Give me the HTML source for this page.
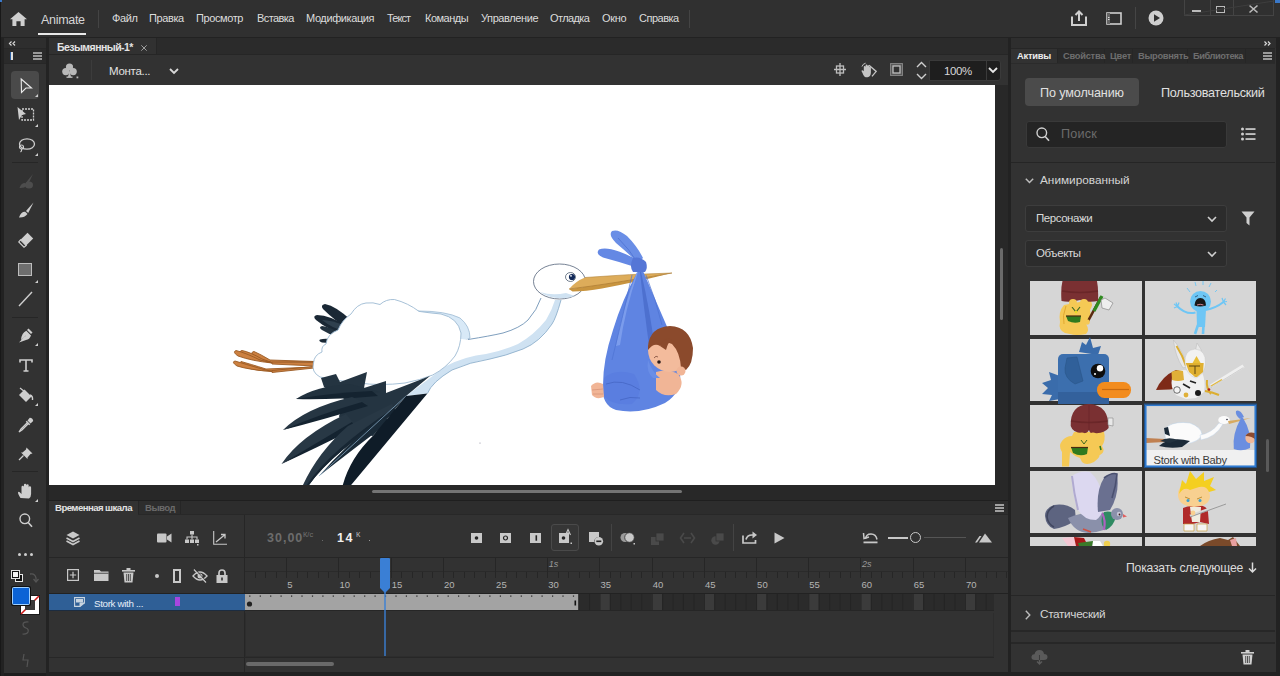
<!DOCTYPE html>
<html><head><meta charset="utf-8">
<style>
*{margin:0;padding:0;box-sizing:border-box}
html,body{width:1280px;height:676px;overflow:hidden;background:#1e1e1e;font-family:"Liberation Sans",sans-serif;color:#c8c8c8}
.a{position:absolute}
.t{position:absolute;white-space:nowrap;line-height:1}
svg{position:absolute;overflow:visible}
</style></head><body>

<!-- MENU BAR -->
<div class="a" style="left:0;top:0;width:1280px;height:37px;background:#303030"></div>
<div class="a" style="left:0;top:37px;width:1280px;height:1px;background:#222"></div>
<div class="a" style="left:0;top:0;width:1px;height:676px;background:#181818"></div>
<div class="a" style="left:0;top:0;width:2px;height:2px;background:#3a78c8"></div>
<!-- home icon -->
<svg style="left:10px;top:12px" width="17" height="14" viewBox="0 0 17 14"><path d="M8.5 0 L17 7.2 L14.6 7.2 L14.6 14 L10.6 14 L10.6 9.2 L6.4 9.2 L6.4 14 L2.4 14 L2.4 7.2 L0 7.2 Z" fill="#cfcfcf"/></svg>
<div class="t" style="left:41px;top:14px;font-size:12.5px;letter-spacing:-0.3px;color:#d6d6d6">Animate</div>
<div class="a" style="left:38px;top:33px;width:48px;height:2px;background:#e8e8e8"></div>
<div class="a" style="left:98px;top:10px;width:1px;height:18px;background:#444"></div>
<div class="t" style="left:112px;top:13px;font-size:11px;letter-spacing:-0.4px;color:#dcdcdc">Файл</div>
<div class="t" style="left:149px;top:13px;font-size:11px;letter-spacing:-0.4px;color:#dcdcdc">Правка</div>
<div class="t" style="left:196px;top:13px;font-size:11px;letter-spacing:-0.4px;color:#dcdcdc">Просмотр</div>
<div class="t" style="left:257px;top:13px;font-size:11px;letter-spacing:-0.6px;color:#dcdcdc">Вставка</div>
<div class="t" style="left:306px;top:13px;font-size:11px;letter-spacing:-0.4px;color:#dcdcdc">Модификация</div>
<div class="t" style="left:387px;top:13px;font-size:11px;letter-spacing:-0.9px;color:#dcdcdc">Текст</div>
<div class="t" style="left:425px;top:13px;font-size:11px;letter-spacing:-0.5px;color:#dcdcdc">Команды</div>
<div class="t" style="left:481px;top:13px;font-size:11px;letter-spacing:-0.4px;color:#dcdcdc">Управление</div>
<div class="t" style="left:550px;top:13px;font-size:11px;letter-spacing:-0.6px;color:#dcdcdc">Отладка</div>
<div class="t" style="left:602px;top:13px;font-size:11px;letter-spacing:-0.3px;color:#dcdcdc">Окно</div>
<div class="t" style="left:639px;top:13px;font-size:11px;letter-spacing:-0.5px;color:#dcdcdc">Справка</div>
<div class="a" style="left:689px;top:10px;width:1px;height:18px;background:#444"></div>
<!-- share icon -->
<svg style="left:1071px;top:10px" width="16" height="16" viewBox="0 0 16 16"><path d="M1 6.5 V15 H15 V6.5 M8 11 V1.5 M4.5 5 L8 1.5 L11.5 5" fill="none" stroke="#cfcfcf" stroke-width="2"/></svg>
<!-- panel icon -->
<svg style="left:1106px;top:12px" width="16" height="13" viewBox="0 0 16 13"><rect x="1" y="1" width="14" height="11" fill="none" stroke="#cfcfcf" stroke-width="1.6"/><rect x="1" y="1" width="3" height="11" fill="#666"/><rect x="2" y="5" width="1.5" height="1" fill="#ddd"/><rect x="2" y="7" width="1.5" height="1" fill="#ddd"/></svg>
<div class="a" style="left:1135px;top:7px;width:1px;height:22px;background:#454545"></div>
<!-- play circle -->
<svg style="left:1148px;top:10px" width="16" height="16" viewBox="0 0 16 16"><circle cx="8" cy="8" r="7.5" fill="#cfcfcf"/><path d="M6 4.2 L12 8 L6 11.8 Z" fill="#303030"/></svg>
<!-- window controls -->
<div class="a" style="left:1184px;top:-1px;width:90px;height:17px;border:1px solid #444;border-top:none"></div>
<div class="a" style="left:1210px;top:0;width:1px;height:16px;background:#444"></div>
<div class="a" style="left:1233px;top:0;width:1px;height:16px;background:#444"></div>
<div class="a" style="left:1192px;top:10px;width:9px;height:2px;background:#bbb"></div>
<div class="a" style="left:1216px;top:6px;width:9px;height:7px;border:1.5px solid #bbb"></div>
<svg style="left:1249px;top:5px" width="9" height="8" viewBox="0 0 9 8"><path d="M0.5 0.5 L8.5 7.5 M8.5 0.5 L0.5 7.5" stroke="#bbb" stroke-width="1.6"/></svg>
<svg style="left:1184px;top:0" width="96" height="16" viewBox="0 0 96 16"><path d="M0 15 L90 1" stroke="#3e3e3e" stroke-width="1"/></svg>
<div class="a" style="left:1275px;top:0;width:5px;height:3px;background:#3a78c8"></div>
<!-- LEFT TOOLBAR -->
<div class="a" style="left:1px;top:38px;width:3px;height:638px;background:#222"></div>
<div class="a" style="left:4px;top:38px;width:42px;height:635px;background:#323232"></div>
<div class="a" style="left:46px;top:38px;width:3px;height:638px;background:#232323"></div>
<div class="a" style="left:4px;top:38px;width:42px;height:10px;background:#2e2e2e"></div>
<div class="a" style="left:4px;top:48px;width:42px;height:1px;background:#272727"></div>
<svg style="left:9px;top:41px" width="7" height="5" viewBox="0 0 7 5"><path d="M2.5 0.5 L0.5 2.5 L2.5 4.5 M6 0.5 L4 2.5 L6 4.5" fill="none" stroke="#d8d8d8" stroke-width="1.2"/></svg>
<div class="a" style="left:4px;top:49px;width:42px;height:14px;background:#2a2a2a"></div>
<div class="a" style="left:13px;top:49px;width:28px;height:14px;background:#2c2c2c"></div>
<div class="a" style="left:10px;top:52px;width:1px;height:8px;background:#2a5da0"></div>
<div class="a" style="left:11px;top:52px;width:2px;height:8px;background:#e0e0e0"></div>
<div class="a" style="left:33px;top:52px;width:9px;height:1.5px;background:#999"></div>
<div class="a" style="left:33px;top:55px;width:9px;height:1.5px;background:#999"></div>
<div class="a" style="left:33px;top:58px;width:9px;height:1.5px;background:#999"></div>
<div class="a" style="left:4px;top:63px;width:42px;height:1px;background:#272727"></div>
<!-- select tool active -->
<div class="a" style="left:11px;top:71px;width:28px;height:28px;background:#4a4a4a;border-radius:4px"></div>
<svg style="left:20px;top:78px" width="14" height="16" viewBox="0 0 14 16"><path d="M1.2 1 L11.5 10 L6 10 L1.5 14.5 Z" fill="none" stroke="#eaeaea" stroke-width="1.1" stroke-linejoin="miter"/></svg>
<svg style="left:35px;top:94px" width="3" height="3" viewBox="0 0 3 3"><path d="M3 0 V3 H0 Z" fill="#cfcfcf"/></svg>
<!-- free transform -->
<svg style="left:17px;top:107px" width="22" height="21" viewBox="0 0 22 21"><path d="M0.5 0 L9 7 L5 8 L2 13 Z" fill="#cfcfcf"/><rect x="5" y="2" width="11.5" height="11" fill="none" stroke="#cfcfcf" stroke-width="1.3" stroke-dasharray="2 1"/><path d="M21 17 V20 H18 Z" fill="#cfcfcf"/></svg>
<!-- lasso -->
<svg style="left:17px;top:137px" width="22" height="20" viewBox="0 0 22 20"><ellipse cx="10" cy="7" rx="7.5" ry="5.2" fill="none" stroke="#cfcfcf" stroke-width="1.3"/><circle cx="4.5" cy="10" r="2" fill="none" stroke="#cfcfcf" stroke-width="1.2"/><path d="M4.5 12 Q5 14 3.5 15" fill="none" stroke="#cfcfcf" stroke-width="1.2"/><path d="M21 16 V19 H18 Z" fill="#cfcfcf"/></svg>
<div class="a" style="left:12px;top:162px;width:26px;height:1px;background:#262626"></div>
<!-- dim brush -->
<svg style="left:18px;top:174px" width="16" height="15" viewBox="0 0 16 15"><path d="M15 0 L8 8.5 L10 10.5 Z" fill="#4d4d4d"/><path d="M7 9 Q3 9 1.5 14 Q6 14.5 9 11.5 Z" fill="#4d4d4d"/><ellipse cx="11" cy="11" rx="4" ry="3.5" fill="#4d4d4d"/></svg>
<!-- brush -->
<svg style="left:18px;top:202px" width="16" height="16" viewBox="0 0 16 16"><path d="M15.5 0.5 L8 9 L10.2 11 Z" fill="#cfcfcf"/><path d="M7.2 9.8 Q3 9.5 1 15.5 Q6.5 15.8 9.5 12 Z" fill="#cfcfcf"/></svg>
<!-- eraser -->
<svg style="left:18px;top:232px" width="16" height="16" viewBox="0 0 16 16"><path d="M9.5 0.8 L15.2 6.5 L8.2 13.5 L2.5 7.8 Z" fill="#cfcfcf"/><path d="M2.5 7.8 L8.2 13.5 L6 15.2 L0.8 10 Z" fill="none" stroke="#cfcfcf" stroke-width="1.2"/></svg>
<!-- rectangle -->
<div class="a" style="left:18px;top:263px;width:14px;height:13px;background:#6e6e6e;border:1.3px solid #bdbdbd"></div>
<svg style="left:35px;top:280px" width="3" height="3" viewBox="0 0 3 3"><path d="M3 0 V3 H0 Z" fill="#cfcfcf"/></svg>
<!-- line -->
<svg style="left:18px;top:291px" width="15" height="16" viewBox="0 0 15 16"><path d="M1 15 L14 1" stroke="#cfcfcf" stroke-width="1.4"/></svg>
<div class="a" style="left:12px;top:317px;width:26px;height:1px;background:#262626"></div>
<!-- pen -->
<svg style="left:18px;top:328px" width="21" height="19" viewBox="0 0 21 19"><path d="M10.5 0.5 L14.5 4.5 L13 6 L9 2 Z" fill="#cfcfcf"/><path d="M8.3 2.8 L13 7.5 Q11.5 11.5 8 12 L1 14.5 L6.5 8.5 Q7.5 8.5 7.5 7.5 L5.5 9.5 L3 12 Q3.5 5 8.3 2.8 Z" fill="#cfcfcf"/><path d="M20 15 V18 H17 Z" fill="#cfcfcf"/></svg>
<!-- text -->
<svg style="left:19px;top:359px" width="14" height="13" viewBox="0 0 14 13"><path d="M1 3.5 V1 H13 V3.5 M7 1 V12 M4.5 12 H9.5" fill="none" stroke="#cfcfcf" stroke-width="1.6"/></svg>
<!-- bucket -->
<svg style="left:17px;top:387px" width="22" height="20" viewBox="0 0 22 20"><path d="M7.5 2.5 L14.5 9.5 L9 15 L2 8 Z" fill="#cfcfcf"/><path d="M3 1 L8 5" stroke="#cfcfcf" stroke-width="1.2"/><path d="M13 8 Q16 9 15.5 13" fill="none" stroke="#cfcfcf" stroke-width="1.4"/><path d="M21 16 V19 H18 Z" fill="#cfcfcf"/></svg>
<!-- eyedropper -->
<svg style="left:18px;top:417px" width="16" height="16" viewBox="0 0 16 16"><path d="M11.8 0.8 Q15 1 15.2 4 L12.5 6.5 L9.5 3.5 Z" fill="#cfcfcf"/><path d="M8.3 4.3 L11.7 7.7" stroke="#cfcfcf" stroke-width="1.5"/><path d="M9.5 5.5 L3 12 L1 15 L4 13 L10.5 6.5" fill="none" stroke="#cfcfcf" stroke-width="1.2"/></svg>
<!-- pin -->
<svg style="left:18px;top:447px" width="15" height="14" viewBox="0 0 15 14"><path d="M8.5 0.5 L14.5 6.5 L12.5 7 L9.5 10.5 L9.5 12 L3 5.5 L4.5 5.5 L8 2.5 Z" fill="#cfcfcf"/><path d="M5.5 8.5 L1 13" stroke="#cfcfcf" stroke-width="1.3"/></svg>
<div class="a" style="left:12px;top:471px;width:26px;height:1px;background:#262626"></div>
<!-- hand -->
<svg style="left:17px;top:483px" width="22" height="19" viewBox="0 0 22 19"><path d="M3.5 15 Q1 11 1 9.5 Q1.5 8.2 3 9.5 L4.5 11 V4 Q4.5 2.8 5.7 2.8 Q6.9 2.8 6.9 4 V8 V2 Q6.9 0.8 8.1 0.8 Q9.3 0.8 9.3 2 V8 V2.5 Q9.3 1.3 10.5 1.3 Q11.7 1.3 11.7 2.5 V8.5 V4.5 Q11.7 3.3 12.9 3.3 Q14.1 3.3 14.1 4.5 V11 Q14.1 14 12 15.5 Z" fill="#cfcfcf"/><path d="M21 16 V19 H18 Z" fill="#cfcfcf"/></svg>
<!-- zoom -->
<svg style="left:19px;top:513px" width="14" height="15" viewBox="0 0 14 15"><circle cx="5.8" cy="5.8" r="4.8" fill="none" stroke="#cfcfcf" stroke-width="1.4"/><path d="M9.2 9.5 L13 13.8" stroke="#cfcfcf" stroke-width="1.6"/></svg>
<!-- dots -->
<div class="a" style="left:18px;top:553px;width:3px;height:3px;border-radius:50%;background:#cfcfcf"></div>
<div class="a" style="left:24px;top:553px;width:3px;height:3px;border-radius:50%;background:#cfcfcf"></div>
<div class="a" style="left:30px;top:553px;width:3px;height:3px;border-radius:50%;background:#cfcfcf"></div>
<!-- swap colors icons -->
<div class="a" style="left:15px;top:574px;width:8px;height:8px;background:#111;border:1px solid #e8e8e8"></div>
<div class="a" style="left:11px;top:570px;width:9px;height:9px;background:#e0e0e0"></div>
<div class="a" style="left:12px;top:571px;width:7px;height:7px;background:#111"></div>
<div class="a" style="left:13px;top:572px;width:5px;height:5px;background:#f4f4f4"></div>
<svg style="left:29px;top:572px" width="10" height="11" viewBox="0 0 10 11"><path d="M1 2 Q6 1 7 6 L7 9" fill="none" stroke="#555" stroke-width="1.3"/><path d="M4.5 7 L7 10 L9.5 7" fill="none" stroke="#555" stroke-width="1.3"/></svg>
<!-- stroke swatch -->
<div class="a" style="left:20px;top:595px;width:20px;height:20px;background:#1a1a1a"></div>
<div class="a" style="left:21px;top:596px;width:18px;height:18px;background:#ffffff"></div>
<svg style="left:21px;top:596px" width="18" height="18" viewBox="0 0 18 18"><path d="M0 18 L18 0" stroke="#d01818" stroke-width="1.6"/></svg>
<div class="a" style="left:25px;top:600px;width:10px;height:10px;background:#3a3a3a"></div>
<!-- fill swatch -->
<div class="a" style="left:11px;top:586px;width:20px;height:20px;background:#111;border-radius:2px"></div>
<div class="a" style="left:12px;top:587px;width:18px;height:18px;background:#9fd0ff;border-radius:2px"></div>
<div class="a" style="left:13px;top:588px;width:16px;height:16px;background:#0b63d6"></div>
<!-- snap icons -->
<svg style="left:21px;top:621px" width="9" height="14" viewBox="0 0 9 14"><path d="M7.5 1 Q2 0.5 2 3.5 Q2 6 5 7 Q8 8 7 11 Q6 13.5 1.5 13" fill="none" stroke="#555" stroke-width="1.2"/></svg>
<svg style="left:22px;top:653px" width="8" height="15" viewBox="0 0 8 15"><path d="M2 1 L1 7 L6 7 L5 14" fill="none" stroke="#555" stroke-width="1.2"/></svg>
<!-- DOC TAB ROW -->
<div class="a" style="left:49px;top:38px;width:959px;height:17px;background:#2b2b2b"></div>
<div class="a" style="left:49px;top:38px;width:107px;height:17px;background:#313131"></div>
<div class="a" style="left:49px;top:54px;width:959px;height:1px;background:#262626"></div>
<div class="a" style="left:156px;top:38px;width:1px;height:17px;background:#262626"></div>
<div class="t" style="left:57px;top:42px;font-size:10.5px;font-weight:bold;letter-spacing:-0.55px;color:#e4e4e4">Безымянный-1*</div>
<svg style="left:141px;top:45px" width="6" height="6" viewBox="0 0 6 6"><path d="M0.3 0.3 L5.7 5.7 M5.7 0.3 L0.3 5.7" stroke="#aaa" stroke-width="0.9"/></svg>
<!-- EDIT BAR -->
<div class="a" style="left:49px;top:55px;width:959px;height:30px;background:#323232"></div>
<svg style="left:62px;top:63px" width="17" height="16" viewBox="0 0 17 16"><circle cx="7.5" cy="4" r="3.6" fill="#b8b8b8"/><circle cx="3.8" cy="8.6" r="3.6" fill="#b8b8b8"/><circle cx="11.2" cy="8.6" r="3.6" fill="#b8b8b8"/><path d="M7.5 7 L9 14 H6 Z" fill="#b8b8b8"/><rect x="4.5" y="13.5" width="6" height="1.4" fill="#b8b8b8"/><rect x="14.5" y="13.5" width="1.8" height="1.8" fill="#b8b8b8"/></svg>
<div class="a" style="left:91px;top:60px;width:1px;height:20px;background:#3c3c3c"></div>
<div class="t" style="left:109px;top:66px;font-size:11.5px;letter-spacing:-0.3px;color:#e2e2e2">Монта...</div>
<svg style="left:169px;top:68px" width="10" height="7" viewBox="0 0 10 7"><path d="M1 1 L5 5 L9 1" fill="none" stroke="#d8d8d8" stroke-width="1.8"/></svg>
<!-- right icons in edit bar -->
<svg style="left:834px;top:63px" width="12" height="13" viewBox="0 0 12 13"><rect x="2.5" y="3" width="7" height="7" fill="none" stroke="#bdbdbd" stroke-width="1.3"/><path d="M6 0 V13 M0 6.5 H12" stroke="#bdbdbd" stroke-width="1.3"/></svg>
<svg style="left:860px;top:62px" width="18" height="17" viewBox="0 0 18 17"><path d="M2.5 11 Q1 9 1.8 8.3 Q2.6 7.8 3.8 9.2 V5 Q3.8 4.1 4.7 4.1 Q5.6 4.1 5.6 5 V3.5 Q5.6 2.6 6.5 2.6 Q7.4 2.6 7.4 3.5 V4 Q7.4 3.2 8.3 3.2 Q9.2 3.2 9.2 4.1 V5.5 Q9.2 4.8 10 4.8 Q10.9 4.8 10.9 5.7 V10.5 Q10.9 14.5 7.5 15.3 H6 Q3.8 15 2.5 11 Z" fill="#c4c4c4"/><path d="M9 3.3 L16.2 9.4 L12 14.3" fill="none" stroke="#c4c4c4" stroke-width="1.3"/><path d="M2 4.5 Q2.8 1.8 5.6 1.2" fill="none" stroke="#c4c4c4" stroke-width="1"/></svg>
<svg style="left:890px;top:63px" width="13" height="13" viewBox="0 0 13 13"><rect x="0.5" y="0.5" width="12" height="12" fill="#5a5a5a"/><rect x="0.5" y="0.5" width="12" height="12" fill="none" stroke="#bdbdbd" stroke-width="1" stroke-dasharray="1 1"/><rect x="3" y="3" width="7" height="7" fill="#323232" stroke="#bdbdbd" stroke-width="1.3"/></svg>

<svg style="left:916px;top:61px" width="11" height="19" viewBox="0 0 11 19"><path d="M1 6 L5.5 1.5 L10 6 M1 13 L5.5 17.5 L10 13" fill="none" stroke="#cfcfcf" stroke-width="1.4"/></svg>
<div class="a" style="left:929px;top:60px;width:72px;height:21px;background:#1e1e1e;border:1px solid #3a3a3a;border-radius:0 3px 3px 0"></div>
<div class="a" style="left:986px;top:61px;width:1px;height:19px;background:#3a3a3a"></div>
<div class="t" style="left:944px;top:66px;font-size:11.5px;letter-spacing:-0.4px;color:#d8d8d8">100%</div>
<svg style="left:988px;top:67px" width="10" height="7" viewBox="0 0 10 7"><path d="M1 1 L5 5 L9 1" fill="none" stroke="#e8e8e8" stroke-width="1.8"/></svg>
<!-- PASTEBOARD -->
<div class="a" style="left:49px;top:85px;width:959px;height:415px;background:#282828"></div>
<!-- stage scrollbar v -->
<div class="a" style="left:1000px;top:248px;width:3px;height:72px;background:#6a6a6a;border-radius:2px"></div>
<!-- stage scrollbar h -->
<div class="a" style="left:372px;top:490px;width:310px;height:3px;background:#747474;border-radius:2px"></div>
<div class="a" style="left:49px;top:500px;width:959px;height:1px;background:#1f1f1f"></div>
<!-- STAGE -->
<div class="a" style="left:49px;top:85px;width:946px;height:400px;background:#ffffff;overflow:hidden">
<svg style="left:0;top:0" width="946" height="400" viewBox="49 85 946 400">
<!-- legs -->
<g stroke="#9a5a24" stroke-width="0.9" fill="#cc8040">
<path d="M315 361.5 L272 362.5 Q262 361 254 356 Q250 352 254 351.5 Q260 354 270 360 Z"/>
<path d="M272 362.5 Q255 360 244 355 Q238 351 242 350.5 Q250 352 262 359 Z"/>
<path d="M272 363 Q252 361 238 356 Q232 352 236 350.5 Q246 353 260 360 Z"/>
<path d="M315 366 L272 364 L272 362 L315 362.5 Z"/>
<path d="M314 367 L272 371 Q256 371 245 367 Q238 363 241 361.5 Q250 364 266 369 Z"/>
<path d="M272 371.5 Q250 370 237 366 Q231 362 235 361 Q245 364 262 369 Z"/>
<path d="M314 368 L272 372.5 L272 370.5 L314 366.5 Z"/>
</g>
<!-- top-left small feathers -->
<g>
<path d="M352 321 Q336 306 325 304 Q320 305 323 309 Q334 320 348 329 Z" fill="#1a2835"/>
<path d="M348 327 Q330 315 317 315 Q312 316 316 320 Q328 330 344 334 Z" fill="#1a2835"/>
<path d="M346 326 Q332 320 322 320 Q332 328 344 331 Z" fill="#2f404e"/>
<path d="M340 333 Q330 327 322 326 Q318 327 322 330 Q330 335 338 337 Z" fill="#22323f"/>
<path d="M336 340 Q326 338 320 339.5 Q318 341 322 342.5 Q330 343 336 343 Z" fill="#1a2835"/>
</g>
<!-- back wing light blue -->
<path d="M418 311 Q446 311 460 318 Q470 326 470 338 L462 342 Z" fill="#d8e9f7" stroke="#9dbad3" stroke-width="0.8"/>
<!-- neck white -->
<path d="M450 334 Q460 340 468 339.5 Q490 336 503 333 Q520 328 528 320 Q537 310 541 298 L561 300 Q556 318 552 324 Q540 342 523 349 Q505 356 490 359 Q470 362 452 370 Q432 382 427.4 393.5 L400 396 Q420 378 450 334 Z" fill="#ffffff"/>
<path d="M561 300 Q556 318 552 324 Q540 342 523 349 Q505 356 490 359 Q470 362 452 370 Q432 382 427.4 393.5 L406 396 Q430 378 446 366 Q466 356 486 354 Q502 351 518 344 Q534 335 546 320 Q552 310 555 300 Z" fill="#cfe2f2"/>
<path d="M468 339.5 Q490 336 503 333 Q520 328 528 320 Q537 310 541 298" fill="none" stroke="#6f93b5" stroke-width="0.9"/>
<path d="M561 300 Q556 318 552 324 Q540 342 523 349 Q505 356 490 359 Q470 362 452 370 Q432 382 427.4 393.5" fill="none" stroke="#8fb0cc" stroke-width="0.9"/>
<!-- white body -->
<path d="M320 377 Q311 372 313.5 363 Q314 355 322 352 Q321 346 326 344 Q327 334 338 330 Q342 320 351 314 Q357 304 366 303 Q373 302 380 304.5 Q386 299 394.4 299.5 Q408 303 419 311.4 Q430 313 441 314 Q458 318 461 333 Q461 346 455 356 Q446 368 432.7 375 Q420 380 405 383 Q380 386 359 383 Q338 381 320 377 Z" fill="#ffffff" stroke="#9dbad3" stroke-width="0.9"/>
<!-- dark feathers mass -->
<path d="M321 378 L336 374 L340 382 L367 372 L364 388 L386 381 L386 393 L430 376 L406 396 L372.8 436 L343.5 430 L339 416 L346 400 L324 387 Z" fill="#243441"/>
<!-- F1 -->
<path d="M296 399 Q316 386 350 384 L380 392 Q330 399 296 399 Z" fill="#22323f"/>
<path d="M296 399 Q330 393 372 391 L378 396 Q330 400 296 399 Z" fill="#142330"/>
<!-- F2 -->
<path d="M283 430 Q305 408 352 397 L368 404 Q320 418 283 430 Z" fill="#263643"/>
<path d="M283 430 Q320 414 362 402 L368 406 Q322 420 283 430 Z" fill="#142330"/>
<!-- F3 -->
<path d="M281.5 464 Q300 436 346 414 L356 426 Q316 446 281.5 464 Z" fill="#283845"/>
<path d="M281.5 464 Q318 442 352 422 L356 428 Q316 448 281.5 464 Z" fill="#142330"/>
<!-- F4 -->
<path d="M302.5 486 Q318 452 348 426 L392 404 L396 412 Q332 452 308.3 486 Z" fill="#283845"/>
<path d="M306 486 Q330 450 394 408 L396 412 Q332 452 308.3 486 Z" fill="#172633"/>
<!-- inner feather -->
<path d="M319 476 Q345 446 380 418 L392 420 Q352 450 319 476 Z" fill="#1a2a37"/>
<path d="M319 476 L406 396" stroke="#8fb3d0" stroke-width="0.7"/>
<!-- darkest long feather -->
<path d="M342.5 486 Q350 458 372.8 436 L406 396 L427.4 393.5 L350.3 486 Z" fill="#0f1c28"/>
<!-- belly band -->

<!-- head -->
<ellipse cx="559.5" cy="281.5" rx="26" ry="17.5" fill="#ffffff" stroke="#4a5a72" stroke-width="0.75"/>
<path d="M540 292 Q555 302 575 296 L566 293 Q552 296 540 292 Z" fill="#cfe2f2"/>
<ellipse cx="570.5" cy="277" rx="5" ry="4.5" fill="#ffffff" stroke="#3a4a60" stroke-width="0.7"/>
<circle cx="572" cy="277" r="3.1" fill="#132a5a"/>
<circle cx="571" cy="275.8" r="0.9" fill="#fff"/>
<!-- beak -->
<path d="M569 289 Q576 281 585 277.5 Q630 274 672 273 Q640 279 610 284 Q590 287.5 569 289 Z" fill="#ddac5a"/>
<path d="M569 289 Q610 284 672 273 Q632 283 602 288.5 Q586 291.5 572.5 291.5 Z" fill="#c8943f"/>
<path d="M585 277.5 Q630 274 672 273" fill="none" stroke="#b3853a" stroke-width="0.6"/>
<path d="M569 289 Q610 284 672 273" fill="none" stroke="#9a6a28" stroke-width="0.5"/>
<!-- bundle -->
<path d="M635 267 Q620 262 603 257.5 Q595 254 599 249.5 Q606 247 619 251.5 Q631 256 639 261 Z" fill="#6488e4"/>
<path d="M638 263 Q628 253 616 243 Q608 235 612 231 Q618 228.5 627 236 Q637 246 643 258 Z" fill="#6a8ee6"/>
<path d="M637 262 Q630 250 618 238" fill="none" stroke="#4e72d2" stroke-width="0.8"/>
<path d="M638 271 Q622 300 613 330 Q603 360 603 385 Q601 405 616 410 Q640 415 665 403 Q682 393 680 372 Q676 345 665 322 Q652 292 643 271 Z" fill="#5f84e2"/>
<path d="M641 272 Q650 310 655 350 L650 352 Q644 310 640 272 Z" fill="#4d70cf"/>
<path d="M638 272 Q625 310 620 345 L616 346 Q622 310 637 272 Z" fill="#7b9cec"/>
<path d="M632 275 Q622 320 612 360" fill="none" stroke="#4e72d2" stroke-width="0.7"/>
<path d="M646 275 Q656 300 662 325" fill="none" stroke="#4e72d2" stroke-width="0.7"/>
<path d="M604 378 Q615 368 634 374 Q646 392 632 404 Q612 406 604 396 Z" fill="#5a7ee0"/>
<path d="M606 384 Q622 378 640 390 M620 400 Q630 396 640 398" fill="none" stroke="#4566c4" stroke-width="0.8"/>
<path d="M633 258 Q640 256 646 262 Q648 268 645 272 L633 272 Q629 266 633 258 Z" fill="#5576d6"/>
<!-- baby -->
<path d="M656 372 Q668 368 678 374 Q686 384 676 394 Q664 398 656 390 Z" fill="#f1b596"/>
<circle cx="670" cy="350" r="22" fill="#f3bb9c"/>
<path d="M648 346 Q650 327 670 326 Q690 327 693 348 Q693 364 686 370 L681 368 Q680 352 672 344 Q665 340 660 346 Q654 342 648 350 Z" fill="#8b4a2c"/>
<path d="M660 346 Q664 336 672 340 Q668 342 666 350 Z" fill="#8b4a2c"/>
<circle cx="681" cy="371" r="4.5" fill="#f1b596"/>
<circle cx="659" cy="362" r="1.8" fill="#2a1a1a"/>
<path d="M654 358 Q656 355 658 357" fill="none" stroke="#7a4a3a" stroke-width="0.8"/>
<path d="M653 378 Q646 372 648 360 Q652 372 660 378 Z" fill="#6a8ee6"/>
<!-- feet -->
<path d="M591 386 Q596 380 603 384 L604 397 Q596 400 592 395 Z" fill="#f1b596"/>
<path d="M592 390 L603 389 M593 394 L603 394" stroke="#d08a70" stroke-width="0.6"/>
<circle cx="480" cy="443" r="0.6" fill="#889"/>
</svg>

</div>
<!-- TIMELINE -->
<div class="a" style="left:49px;top:501px;width:959px;height:171px;background:#323232"></div>
<div class="a" style="left:49px;top:501px;width:959px;height:14px;background:#2d2d2d"></div>
<div class="a" style="left:49px;top:501px;width:89px;height:14px;background:#323232"></div>
<div class="a" style="left:138px;top:501px;width:1px;height:14px;background:#262626"></div>
<div class="a" style="left:180px;top:501px;width:1px;height:14px;background:#262626"></div>
<div class="t" style="left:55px;top:503px;font-size:9.6px;font-weight:bold;letter-spacing:-0.55px;color:#e2e2e2">Временная шкала</div>
<div class="t" style="left:145px;top:503px;font-size:9.6px;font-weight:bold;letter-spacing:-0.55px;color:#6a6a6a">Вывод</div>
<div class="a" style="left:995px;top:504px;width:9px;height:1.5px;background:#a0a0a0"></div>
<div class="a" style="left:995px;top:507px;width:9px;height:1.5px;background:#a0a0a0"></div>
<div class="a" style="left:995px;top:510px;width:9px;height:1.5px;background:#a0a0a0"></div>
<div class="a" style="left:244px;top:515px;width:1px;height:157px;background:#262626"></div>
<div class="a" style="left:49px;top:557px;width:195px;height:1px;background:#262626"></div>
<svg style="left:66px;top:531px" width="14" height="14" viewBox="0 0 14 14"><path d="M7 0.5 L13.5 4 L7 7.5 L0.5 4 Z" fill="#c8c8c8"/><path d="M0.5 7 L7 10.5 L13.5 7" fill="none" stroke="#c8c8c8" stroke-width="1.6"/><path d="M0.5 10 L7 13.5 L13.5 10" fill="none" stroke="#c8c8c8" stroke-width="1.6"/></svg>
<svg style="left:157px;top:533px" width="15" height="10" viewBox="0 0 15 10"><rect x="0" y="0.5" width="9.5" height="9" rx="1" fill="#c8c8c8"/><path d="M10 3.5 L14.5 0.5 V9.5 L10 6.5 Z" fill="#c8c8c8"/></svg>
<svg style="left:185px;top:531px" width="14" height="15" viewBox="0 0 14 15"><rect x="5" y="0" width="4" height="3.5" fill="#c8c8c8"/><path d="M7 3.5 V6 M2 8.5 V6 H12 V8.5 M7 6 V8.5" fill="none" stroke="#c8c8c8" stroke-width="1.1"/><rect x="0" y="8.5" width="4" height="3.5" fill="#c8c8c8"/><rect x="5" y="8.5" width="4" height="3.5" fill="#c8c8c8"/><rect x="10" y="8.5" width="4" height="3.5" fill="#c8c8c8"/><rect x="12" y="13" width="1.5" height="1.5" fill="#c8c8c8"/></svg>
<svg style="left:213px;top:531px" width="14" height="14" viewBox="0 0 14 14"><path d="M0.7 0 V13.3 H14" fill="none" stroke="#c8c8c8" stroke-width="1.1"/><path d="M3 11 L11.5 4 M8 3.5 H12 V7.5" fill="none" stroke="#c8c8c8" stroke-width="1.3"/></svg>
<div class="t" style="left:267px;top:532px;font-size:12.5px;font-weight:bold;letter-spacing:1px;color:#6c6c6c">30,00</div>
<div class="t" style="left:303px;top:531px;font-size:7.5px;color:#727272">К/с</div>
<div class="a" style="left:322px;top:540px;width:1px;height:1px;background:#6a6a6a"></div>
<div class="t" style="left:337px;top:532px;font-size:12.5px;font-weight:bold;letter-spacing:1.6px;color:#f0f0f0">14</div>
<div class="t" style="left:356px;top:531px;font-size:7.5px;color:#bdbdbd">К</div>
<div class="a" style="left:369px;top:540px;width:1px;height:1px;background:#999"></div>
<svg style="left:471px;top:533px" width="11" height="10" viewBox="0 0 11 10"><rect width="11" height="10" fill="#c8c8c8"/><circle cx="5.5" cy="5" r="1.8" fill="#222"/></svg>
<svg style="left:500px;top:533px" width="11" height="10" viewBox="0 0 11 10"><rect width="11" height="10" fill="#c8c8c8"/><circle cx="5.5" cy="5" r="2" fill="none" stroke="#222" stroke-width="1.2"/></svg>
<svg style="left:530px;top:533px" width="11" height="10" viewBox="0 0 11 10"><rect width="11" height="10" fill="#c8c8c8"/><rect x="5.5" y="2.3" width="1.6" height="5.4" fill="#222"/></svg>
<div class="a" style="left:551px;top:524px;width:28px;height:27px;border:1px solid #4a4a4a;border-radius:3px;background:#363636"></div>
<svg style="left:559px;top:529px" width="14" height="16" viewBox="0 0 14 16"><rect x="0" y="4" width="10" height="10" fill="#c8c8c8"/><circle cx="4.5" cy="9" r="1.8" fill="#222"/><path d="M6.5 6 L9 0.5 L11.5 6 M7.5 4 H10.5" fill="none" stroke="#c8c8c8" stroke-width="1.1"/><rect x="11.5" y="13.5" width="1.5" height="1.5" fill="#c8c8c8"/></svg>
<svg style="left:589px;top:532px" width="15" height="14" viewBox="0 0 15 14"><path d="M0 0 H10 V5 A5 5 0 0 0 5 10 H0 Z" fill="#c8c8c8"/><circle cx="9.8" cy="9.3" r="4.3" fill="#c8c8c8"/><rect x="7.3" y="8.5" width="5" height="1.6" fill="#222"/></svg>
<div class="a" style="left:611px;top:524px;width:1px;height:27px;background:#444"></div>
<svg style="left:620px;top:532px" width="16" height="13" viewBox="0 0 16 13"><circle cx="5" cy="5.5" r="4.5" fill="#9a9a9a"/><circle cx="9.5" cy="5.5" r="4.8" fill="#c8c8c8" stroke="#323232" stroke-width="0.8"/><rect x="13.5" y="11" width="1.5" height="1.5" fill="#c8c8c8"/></svg>
<svg style="left:651px;top:532px" width="14" height="13" viewBox="0 0 14 13"><rect x="0" y="5" width="8" height="8" fill="#4a4a4a"/><rect x="5" y="1" width="8" height="8" fill="#4a4a4a" stroke="#323232" stroke-width="0.8"/></svg>
<svg style="left:680px;top:532px" width="15" height="12" viewBox="0 0 15 12"><path d="M4 1 L0.5 6 L4 11 M11 1 L14.5 6 L11 11 M4 6 H11" fill="none" stroke="#4a4a4a" stroke-width="1.6"/></svg>
<svg style="left:711px;top:532px" width="14" height="13" viewBox="0 0 14 13"><circle cx="4.5" cy="8.5" r="4.2" fill="#4a4a4a"/><rect x="5" y="1" width="8" height="8" fill="#4a4a4a" stroke="#323232" stroke-width="0.8"/></svg>
<div class="a" style="left:733px;top:524px;width:1px;height:27px;background:#444"></div>
<svg style="left:742px;top:531px" width="16" height="13" viewBox="0 0 16 13"><path d="M1 4.5 V12 H13.5 V9" fill="none" stroke="#c8c8c8" stroke-width="1.7"/><path d="M4 8.5 Q5 4 10 4 H11" fill="none" stroke="#c8c8c8" stroke-width="1.7"/><path d="M10.5 0.5 L15 4 L10.5 7.5 Z" fill="#c8c8c8"/></svg>
<svg style="left:774px;top:532px" width="11" height="12" viewBox="0 0 11 12"><path d="M0.5 0.5 L10.5 6 L0.5 11.5 Z" fill="#c8c8c8"/></svg>
<svg style="left:863px;top:532px" width="16" height="12" viewBox="0 0 16 12"><path d="M2.5 7 Q3 2 8 2 Q13 2 14 7.5" fill="none" stroke="#c8c8c8" stroke-width="1.5"/><path d="M0.5 1 L1 6.5 L6 5" fill="none" stroke="#c8c8c8" stroke-width="1.5"/><rect x="0.5" y="9.5" width="14" height="1.8" fill="#c8c8c8"/></svg>
<div class="a" style="left:888px;top:537px;width:20px;height:2px;background:#c8c8c8"></div>
<div class="a" style="left:910px;top:532px;width:11px;height:11px;border:1.6px solid #c8c8c8;border-radius:50%"></div>
<div class="a" style="left:924px;top:537px;width:42px;height:1px;background:#555"></div>
<svg style="left:975px;top:533px" width="18" height="10" viewBox="0 0 18 10"><path d="M0 9.5 L4.5 3 L6.5 3 L2 9.5 Z" fill="#c8c8c8"/><path d="M4 9.5 L10 0.5 L17 9.5 Z" fill="#c8c8c8"/></svg>
<svg style="left:67px;top:569px" width="12" height="12" viewBox="0 0 12 12"><rect x="0.6" y="0.6" width="10.8" height="10.8" fill="none" stroke="#c8c8c8" stroke-width="1.2"/><path d="M6 2.8 V9.2 M2.8 6 H9.2" stroke="#c8c8c8" stroke-width="1.2"/></svg>
<svg style="left:94px;top:569px" width="15" height="12" viewBox="0 0 15 12"><path d="M0 1 H5.5 L7 2.5 H14.5 V12 H0 Z" fill="#c8c8c8"/><rect x="0" y="3.8" width="14.5" height="0.8" fill="#323232"/></svg>
<svg style="left:122px;top:568px" width="13" height="15" viewBox="0 0 13 15"><rect x="0" y="2" width="13" height="1.6" fill="#c8c8c8"/><rect x="4.5" y="0" width="4" height="2" fill="#c8c8c8"/><path d="M1.5 4.5 H11.5 L10.5 14.5 H2.5 Z" fill="#c8c8c8"/><path d="M4.7 6 V13 M6.5 6 V13 M8.3 6 V13" stroke="#323232" stroke-width="0.8"/></svg>
<div class="a" style="left:155px;top:574px;width:4px;height:4px;border-radius:50%;background:#c8c8c8"></div>
<div class="a" style="left:173px;top:569px;width:8px;height:14px;border:2px solid #c8c8c8"></div>
<svg style="left:192px;top:569px" width="16" height="14" viewBox="0 0 16 14"><path d="M1 7 Q8 -1 15 7 Q8 15 1 7 Z" fill="none" stroke="#c8c8c8" stroke-width="1.4"/><circle cx="8" cy="7" r="2.5" fill="#c8c8c8"/><path d="M2 0.5 L14 13.5" stroke="#c8c8c8" stroke-width="1.3"/><path d="M3 0 L15 13" stroke="#323232" stroke-width="0.8"/></svg>
<svg style="left:216px;top:569px" width="12" height="14" viewBox="0 0 12 14"><path d="M3 6 V4 Q3 1 6 1 Q9 1 9 4 V6" fill="none" stroke="#c8c8c8" stroke-width="1.7"/><rect x="0.5" y="6" width="11" height="8" fill="#c8c8c8"/><rect x="5.2" y="8.5" width="1.6" height="3" fill="#323232"/></svg>
<div class="a" style="left:49px;top:594px;width:196px;height:16px;background:#2f5f96"></div>
<div class="a" style="left:49px;top:593px;width:196px;height:1px;background:#222"></div>
<div class="a" style="left:49px;top:610px;width:196px;height:1px;background:#1c2c40"></div>
<svg style="left:74px;top:597px" width="11" height="10" viewBox="0 0 11 10"><path d="M0.6 0.6 H10.4 V6 L6 9.4 H0.6 Z" fill="none" stroke="#c8d4e0" stroke-width="1.1"/><path d="M6 9.4 V6 H10.4" fill="#c8d4e0" stroke="#c8d4e0" stroke-width="1"/><rect x="2" y="2" width="7" height="3.5" fill="#c8d4e0"/></svg>
<div class="t" style="left:94px;top:599px;font-size:9.8px;letter-spacing:-0.35px;color:#e6eef8">Stork with ...</div>
<div class="a" style="left:175px;top:597px;width:5px;height:9px;background:#a646e0"></div>
<div class="a" style="left:49px;top:514px;width:959px;height:1px;background:#282828"></div>
<div class="a" style="left:49px;top:501px;width:89px;height:14px;background:#323232"></div>
<div class="t" style="left:55px;top:503px;font-size:9.6px;font-weight:bold;letter-spacing:-0.55px;color:#e2e2e2">Временная шкала</div>
<div class="a" style="left:245px;top:557px;width:763px;height:1px;background:#262626"></div>
<div class="a" style="left:245px;top:571px;width:763px;height:1px;background:#2a2a2a"></div>
<div class="a" style="left:245px;top:593px;width:763px;height:1px;background:#222"></div>
<svg style="left:0;top:0" width="1280" height="676" viewBox="0 0 1280 676"><path d="M244.5 572 V578" stroke="#262626" stroke-width="1"/><path d="M255.5 572 V578" stroke="#262626" stroke-width="1"/><path d="M265.5 572 V578" stroke="#262626" stroke-width="1"/><path d="M276.5 572 V578" stroke="#262626" stroke-width="1"/><path d="M286.5 558 V578" stroke="#262626" stroke-width="1"/><path d="M297.5 572 V578" stroke="#262626" stroke-width="1"/><path d="M307.5 572 V578" stroke="#262626" stroke-width="1"/><path d="M318.5 572 V578" stroke="#262626" stroke-width="1"/><path d="M328.5 572 V578" stroke="#262626" stroke-width="1"/><path d="M338.5 558 V578" stroke="#262626" stroke-width="1"/><path d="M349.5 572 V578" stroke="#262626" stroke-width="1"/><path d="M359.5 572 V578" stroke="#262626" stroke-width="1"/><path d="M370.5 572 V578" stroke="#262626" stroke-width="1"/><path d="M380.5 572 V578" stroke="#262626" stroke-width="1"/><path d="M391.5 558 V578" stroke="#262626" stroke-width="1"/><path d="M401.5 572 V578" stroke="#262626" stroke-width="1"/><path d="M412.5 572 V578" stroke="#262626" stroke-width="1"/><path d="M422.5 572 V578" stroke="#262626" stroke-width="1"/><path d="M432.5 572 V578" stroke="#262626" stroke-width="1"/><path d="M443.5 558 V578" stroke="#262626" stroke-width="1"/><path d="M453.5 572 V578" stroke="#262626" stroke-width="1"/><path d="M464.5 572 V578" stroke="#262626" stroke-width="1"/><path d="M474.5 572 V578" stroke="#262626" stroke-width="1"/><path d="M485.5 572 V578" stroke="#262626" stroke-width="1"/><path d="M495.5 558 V578" stroke="#262626" stroke-width="1"/><path d="M506.5 572 V578" stroke="#262626" stroke-width="1"/><path d="M516.5 572 V578" stroke="#262626" stroke-width="1"/><path d="M526.5 572 V578" stroke="#262626" stroke-width="1"/><path d="M537.5 572 V578" stroke="#262626" stroke-width="1"/><path d="M547.5 558 V578" stroke="#262626" stroke-width="1"/><path d="M558.5 572 V578" stroke="#262626" stroke-width="1"/><path d="M568.5 572 V578" stroke="#262626" stroke-width="1"/><path d="M579.5 572 V578" stroke="#262626" stroke-width="1"/><path d="M589.5 572 V578" stroke="#262626" stroke-width="1"/><path d="M599.5 558 V578" stroke="#262626" stroke-width="1"/><path d="M610.5 572 V578" stroke="#262626" stroke-width="1"/><path d="M620.5 572 V578" stroke="#262626" stroke-width="1"/><path d="M631.5 572 V578" stroke="#262626" stroke-width="1"/><path d="M641.5 572 V578" stroke="#262626" stroke-width="1"/><path d="M652.5 558 V578" stroke="#262626" stroke-width="1"/><path d="M662.5 572 V578" stroke="#262626" stroke-width="1"/><path d="M673.5 572 V578" stroke="#262626" stroke-width="1"/><path d="M683.5 572 V578" stroke="#262626" stroke-width="1"/><path d="M693.5 572 V578" stroke="#262626" stroke-width="1"/><path d="M704.5 558 V578" stroke="#262626" stroke-width="1"/><path d="M714.5 572 V578" stroke="#262626" stroke-width="1"/><path d="M725.5 572 V578" stroke="#262626" stroke-width="1"/><path d="M735.5 572 V578" stroke="#262626" stroke-width="1"/><path d="M746.5 572 V578" stroke="#262626" stroke-width="1"/><path d="M756.5 558 V578" stroke="#262626" stroke-width="1"/><path d="M766.5 572 V578" stroke="#262626" stroke-width="1"/><path d="M777.5 572 V578" stroke="#262626" stroke-width="1"/><path d="M787.5 572 V578" stroke="#262626" stroke-width="1"/><path d="M798.5 572 V578" stroke="#262626" stroke-width="1"/><path d="M808.5 558 V578" stroke="#262626" stroke-width="1"/><path d="M819.5 572 V578" stroke="#262626" stroke-width="1"/><path d="M829.5 572 V578" stroke="#262626" stroke-width="1"/><path d="M840.5 572 V578" stroke="#262626" stroke-width="1"/><path d="M850.5 572 V578" stroke="#262626" stroke-width="1"/><path d="M860.5 558 V578" stroke="#262626" stroke-width="1"/><path d="M871.5 572 V578" stroke="#262626" stroke-width="1"/><path d="M881.5 572 V578" stroke="#262626" stroke-width="1"/><path d="M892.5 572 V578" stroke="#262626" stroke-width="1"/><path d="M902.5 572 V578" stroke="#262626" stroke-width="1"/><path d="M913.5 558 V578" stroke="#262626" stroke-width="1"/><path d="M923.5 572 V578" stroke="#262626" stroke-width="1"/><path d="M934.5 572 V578" stroke="#262626" stroke-width="1"/><path d="M944.5 572 V578" stroke="#262626" stroke-width="1"/><path d="M954.5 572 V578" stroke="#262626" stroke-width="1"/><path d="M965.5 558 V578" stroke="#262626" stroke-width="1"/><path d="M975.5 572 V578" stroke="#262626" stroke-width="1"/><path d="M986.5 572 V578" stroke="#262626" stroke-width="1"/><path d="M996.5 572 V578" stroke="#262626" stroke-width="1"/><path d="M1006.5 572 V578" stroke="#262626" stroke-width="1"/></svg>
<div class="t" style="left:287.3px;top:580px;font-size:9.5px;color:#b4b4b4">5</div>
<div class="t" style="left:339.5px;top:580px;font-size:9.5px;color:#b4b4b4">10</div>
<div class="t" style="left:391.7px;top:580px;font-size:9.5px;color:#b4b4b4">15</div>
<div class="t" style="left:443.9px;top:580px;font-size:9.5px;color:#b4b4b4">20</div>
<div class="t" style="left:496.1px;top:580px;font-size:9.5px;color:#b4b4b4">25</div>
<div class="t" style="left:548.3px;top:580px;font-size:9.5px;color:#b4b4b4">30</div>
<div class="t" style="left:600.5px;top:580px;font-size:9.5px;color:#b4b4b4">35</div>
<div class="t" style="left:652.7px;top:580px;font-size:9.5px;color:#b4b4b4">40</div>
<div class="t" style="left:704.9px;top:580px;font-size:9.5px;color:#b4b4b4">45</div>
<div class="t" style="left:757.1px;top:580px;font-size:9.5px;color:#b4b4b4">50</div>
<div class="t" style="left:809.3px;top:580px;font-size:9.5px;color:#b4b4b4">55</div>
<div class="t" style="left:861.5px;top:580px;font-size:9.5px;color:#b4b4b4">60</div>
<div class="t" style="left:913.7px;top:580px;font-size:9.5px;color:#b4b4b4">65</div>
<div class="t" style="left:965.9px;top:580px;font-size:9.5px;color:#b4b4b4">70</div>
<div class="t" style="left:548.8px;top:560px;font-size:9px;font-style:italic;color:#9a9a9a">1s</div>
<div class="t" style="left:862.0px;top:560px;font-size:9px;font-style:italic;color:#9a9a9a">2s</div>
<svg style="left:0;top:0" width="1280" height="676" viewBox="0 0 1280 676"><rect x="245" y="594" width="333.5" height="16" fill="#a3a3a3"/><rect x="249.2" y="595.5" width="1.2" height="1.2" fill="#222"/><rect x="259.7" y="595.5" width="1.2" height="1.2" fill="#222"/><rect x="270.1" y="595.5" width="1.2" height="1.2" fill="#222"/><rect x="280.5" y="595.5" width="1.2" height="1.2" fill="#222"/><rect x="291.0" y="595.5" width="1.2" height="1.2" fill="#222"/><rect x="301.4" y="595.5" width="1.2" height="1.2" fill="#222"/><rect x="311.9" y="595.5" width="1.2" height="1.2" fill="#222"/><rect x="322.3" y="595.5" width="1.2" height="1.2" fill="#222"/><rect x="332.7" y="595.5" width="1.2" height="1.2" fill="#222"/><rect x="343.2" y="595.5" width="1.2" height="1.2" fill="#222"/><rect x="353.6" y="595.5" width="1.2" height="1.2" fill="#222"/><rect x="364.1" y="595.5" width="1.2" height="1.2" fill="#222"/><rect x="374.5" y="595.5" width="1.2" height="1.2" fill="#222"/><rect x="384.9" y="595.5" width="1.2" height="1.2" fill="#222"/><rect x="395.4" y="595.5" width="1.2" height="1.2" fill="#222"/><rect x="405.8" y="595.5" width="1.2" height="1.2" fill="#222"/><rect x="416.3" y="595.5" width="1.2" height="1.2" fill="#222"/><rect x="426.7" y="595.5" width="1.2" height="1.2" fill="#222"/><rect x="437.1" y="595.5" width="1.2" height="1.2" fill="#222"/><rect x="447.6" y="595.5" width="1.2" height="1.2" fill="#222"/><rect x="458.0" y="595.5" width="1.2" height="1.2" fill="#222"/><rect x="468.5" y="595.5" width="1.2" height="1.2" fill="#222"/><rect x="478.9" y="595.5" width="1.2" height="1.2" fill="#222"/><rect x="489.3" y="595.5" width="1.2" height="1.2" fill="#222"/><rect x="499.8" y="595.5" width="1.2" height="1.2" fill="#222"/><rect x="510.2" y="595.5" width="1.2" height="1.2" fill="#222"/><rect x="520.7" y="595.5" width="1.2" height="1.2" fill="#222"/><rect x="531.1" y="595.5" width="1.2" height="1.2" fill="#222"/><rect x="541.5" y="595.5" width="1.2" height="1.2" fill="#222"/><rect x="552.0" y="595.5" width="1.2" height="1.2" fill="#222"/><rect x="562.4" y="595.5" width="1.2" height="1.2" fill="#222"/><rect x="572.9" y="595.5" width="1.2" height="1.2" fill="#222"/><circle cx="249.5" cy="604" r="2.6" fill="#222"/><rect x="574.5" y="600.5" width="1.6" height="5" fill="#111"/><rect x="578.58" y="594" width="10.44" height="16" fill="#2b2b2b"/><rect x="578.58" y="594" width="1" height="16" fill="#252525"/><rect x="589.02" y="594" width="10.44" height="16" fill="#2b2b2b"/><rect x="589.02" y="594" width="1" height="16" fill="#252525"/><rect x="599.46" y="594" width="10.44" height="16" fill="#3b3b3b"/><rect x="599.46" y="594" width="1" height="16" fill="#252525"/><rect x="609.90" y="594" width="10.44" height="16" fill="#2b2b2b"/><rect x="609.90" y="594" width="1" height="16" fill="#252525"/><rect x="620.34" y="594" width="10.44" height="16" fill="#2b2b2b"/><rect x="620.34" y="594" width="1" height="16" fill="#252525"/><rect x="630.78" y="594" width="10.44" height="16" fill="#2b2b2b"/><rect x="630.78" y="594" width="1" height="16" fill="#252525"/><rect x="641.22" y="594" width="10.44" height="16" fill="#2b2b2b"/><rect x="641.22" y="594" width="1" height="16" fill="#252525"/><rect x="651.66" y="594" width="10.44" height="16" fill="#3b3b3b"/><rect x="651.66" y="594" width="1" height="16" fill="#252525"/><rect x="662.10" y="594" width="10.44" height="16" fill="#2b2b2b"/><rect x="662.10" y="594" width="1" height="16" fill="#252525"/><rect x="672.54" y="594" width="10.44" height="16" fill="#2b2b2b"/><rect x="672.54" y="594" width="1" height="16" fill="#252525"/><rect x="682.98" y="594" width="10.44" height="16" fill="#2b2b2b"/><rect x="682.98" y="594" width="1" height="16" fill="#252525"/><rect x="693.42" y="594" width="10.44" height="16" fill="#2b2b2b"/><rect x="693.42" y="594" width="1" height="16" fill="#252525"/><rect x="703.86" y="594" width="10.44" height="16" fill="#3b3b3b"/><rect x="703.86" y="594" width="1" height="16" fill="#252525"/><rect x="714.30" y="594" width="10.44" height="16" fill="#2b2b2b"/><rect x="714.30" y="594" width="1" height="16" fill="#252525"/><rect x="724.74" y="594" width="10.44" height="16" fill="#2b2b2b"/><rect x="724.74" y="594" width="1" height="16" fill="#252525"/><rect x="735.18" y="594" width="10.44" height="16" fill="#2b2b2b"/><rect x="735.18" y="594" width="1" height="16" fill="#252525"/><rect x="745.62" y="594" width="10.44" height="16" fill="#2b2b2b"/><rect x="745.62" y="594" width="1" height="16" fill="#252525"/><rect x="756.06" y="594" width="10.44" height="16" fill="#3b3b3b"/><rect x="756.06" y="594" width="1" height="16" fill="#252525"/><rect x="766.50" y="594" width="10.44" height="16" fill="#2b2b2b"/><rect x="766.50" y="594" width="1" height="16" fill="#252525"/><rect x="776.94" y="594" width="10.44" height="16" fill="#2b2b2b"/><rect x="776.94" y="594" width="1" height="16" fill="#252525"/><rect x="787.38" y="594" width="10.44" height="16" fill="#2b2b2b"/><rect x="787.38" y="594" width="1" height="16" fill="#252525"/><rect x="797.82" y="594" width="10.44" height="16" fill="#2b2b2b"/><rect x="797.82" y="594" width="1" height="16" fill="#252525"/><rect x="808.26" y="594" width="10.44" height="16" fill="#3b3b3b"/><rect x="808.26" y="594" width="1" height="16" fill="#252525"/><rect x="818.70" y="594" width="10.44" height="16" fill="#2b2b2b"/><rect x="818.70" y="594" width="1" height="16" fill="#252525"/><rect x="829.14" y="594" width="10.44" height="16" fill="#2b2b2b"/><rect x="829.14" y="594" width="1" height="16" fill="#252525"/><rect x="839.58" y="594" width="10.44" height="16" fill="#2b2b2b"/><rect x="839.58" y="594" width="1" height="16" fill="#252525"/><rect x="850.02" y="594" width="10.44" height="16" fill="#2b2b2b"/><rect x="850.02" y="594" width="1" height="16" fill="#252525"/><rect x="860.46" y="594" width="10.44" height="16" fill="#3b3b3b"/><rect x="860.46" y="594" width="1" height="16" fill="#252525"/><rect x="870.90" y="594" width="10.44" height="16" fill="#2b2b2b"/><rect x="870.90" y="594" width="1" height="16" fill="#252525"/><rect x="881.34" y="594" width="10.44" height="16" fill="#2b2b2b"/><rect x="881.34" y="594" width="1" height="16" fill="#252525"/><rect x="891.78" y="594" width="10.44" height="16" fill="#2b2b2b"/><rect x="891.78" y="594" width="1" height="16" fill="#252525"/><rect x="902.22" y="594" width="10.44" height="16" fill="#2b2b2b"/><rect x="902.22" y="594" width="1" height="16" fill="#252525"/><rect x="912.66" y="594" width="10.44" height="16" fill="#3b3b3b"/><rect x="912.66" y="594" width="1" height="16" fill="#252525"/><rect x="923.10" y="594" width="10.44" height="16" fill="#2b2b2b"/><rect x="923.10" y="594" width="1" height="16" fill="#252525"/><rect x="933.54" y="594" width="10.44" height="16" fill="#2b2b2b"/><rect x="933.54" y="594" width="1" height="16" fill="#252525"/><rect x="943.98" y="594" width="10.44" height="16" fill="#2b2b2b"/><rect x="943.98" y="594" width="1" height="16" fill="#252525"/><rect x="954.42" y="594" width="10.44" height="16" fill="#2b2b2b"/><rect x="954.42" y="594" width="1" height="16" fill="#252525"/><rect x="964.86" y="594" width="10.44" height="16" fill="#3b3b3b"/><rect x="964.86" y="594" width="1" height="16" fill="#252525"/><rect x="975.30" y="594" width="10.44" height="16" fill="#2b2b2b"/><rect x="975.30" y="594" width="1" height="16" fill="#252525"/><rect x="985.74" y="594" width="8.26" height="16" fill="#2b2b2b"/><rect x="985.74" y="594" width="1" height="16" fill="#252525"/></svg>
<div class="a" style="left:245px;top:610px;width:749px;height:1px;background:#262626"></div>
<svg style="left:379px;top:557px" width="12" height="101" viewBox="0 0 12 101"><path d="M1 2 Q1 1 2 1 H10 Q11 1 11 2 V31 L6 36 L1 31 Z" fill="#3a7fd5"/><rect x="5.3" y="35" width="1.4" height="65" fill="#3a7fd5"/></svg>
<div class="a" style="left:49px;top:657px;width:945px;height:1px;background:#272727"></div>
<div class="a" style="left:246px;top:662px;width:88px;height:4px;background:#6a6a6a;border-radius:2px"></div>
<div class="a" style="left:245px;top:613px;width:749px;height:44px;border:1px solid #2d2d2d;border-top:none"></div>
<div class="a" style="left:49px;top:672px;width:1231px;height:4px;background:#222"></div>
<!-- RIGHT PANEL -->
<div class="a" style="left:1008px;top:38px;width:3px;height:638px;background:#222"></div>
<div class="a" style="left:1011px;top:38px;width:265px;height:634px;background:#323232"></div>
<div class="a" style="left:1276px;top:38px;width:4px;height:638px;background:#222"></div>
<div class="a" style="left:1011px;top:38px;width:265px;height:10px;background:#2e2e2e"></div>
<svg style="left:1264px;top:41px" width="7" height="5" viewBox="0 0 7 5"><path d="M0.5 0.5 L2.5 2.5 L0.5 4.5 M4 0.5 L6 2.5 L4 4.5" fill="none" stroke="#d8d8d8" stroke-width="1.2"/></svg>
<div class="a" style="left:1011px;top:48px;width:264px;height:1px;background:#262626"></div>
<div class="a" style="left:1011px;top:49px;width:264px;height:14px;background:#2a2a2a"></div>
<div class="a" style="left:1011px;top:49px;width:46px;height:14px;background:#323232"></div>
<div class="a" style="left:1057px;top:49px;width:1px;height:14px;background:#262626"></div>
<div class="a" style="left:1104px;top:49px;width:1px;height:14px;background:#262626"></div>
<div class="a" style="left:1132px;top:49px;width:1px;height:14px;background:#262626"></div>
<div class="a" style="left:1187px;top:49px;width:1px;height:14px;background:#262626"></div>
<div class="a" style="left:1245px;top:49px;width:1px;height:14px;background:#262626"></div>
<div class="t" style="left:1017px;top:51.5px;font-size:9.3px;font-weight:bold;letter-spacing:-0.2px;color:#ececec">Активы</div>
<div class="t" style="left:1063px;top:51.5px;font-size:9.3px;font-weight:bold;letter-spacing:-0.25px;color:#6e6e6e">Свойства</div>
<div class="t" style="left:1110px;top:51.5px;font-size:9.3px;font-weight:bold;letter-spacing:-0.25px;color:#6e6e6e">Цвет</div>
<div class="t" style="left:1138px;top:51.5px;font-size:9.3px;font-weight:bold;letter-spacing:-0.3px;color:#6e6e6e">Выровнять</div>
<div class="t" style="left:1193px;top:51.5px;font-size:9.3px;font-weight:bold;letter-spacing:-0.45px;color:#6e6e6e">Библиотека</div>
<div class="a" style="left:1263px;top:52px;width:9px;height:1.5px;background:#999"></div>
<div class="a" style="left:1263px;top:55px;width:9px;height:1.5px;background:#999"></div>
<div class="a" style="left:1263px;top:58px;width:9px;height:1.5px;background:#999"></div>
<div class="a" style="left:1011px;top:63px;width:264px;height:1px;background:#2b2b2b"></div>
<!-- default/custom -->
<div class="a" style="left:1025px;top:78px;width:114px;height:28px;background:#4b4b4b;border-radius:4px"></div>
<div class="t" style="left:1040px;top:87px;font-size:12.6px;letter-spacing:-0.1px;color:#e0e0e0">По умолчанию</div>
<div class="t" style="left:1161px;top:87px;font-size:12.6px;letter-spacing:-0.25px;color:#e0e0e0">Пользовательский</div>
<!-- search -->
<div class="a" style="left:1026px;top:121px;width:201px;height:27px;background:#242424;border:1px solid #393939;border-radius:3px"></div>
<svg style="left:1036px;top:127px" width="14" height="15" viewBox="0 0 14 15"><circle cx="5.8" cy="5.8" r="4.8" fill="none" stroke="#d0d0d0" stroke-width="1.4"/><path d="M9.2 9.5 L13 13.8" stroke="#d0d0d0" stroke-width="1.6"/></svg>
<div class="t" style="left:1061px;top:128px;font-size:12.6px;letter-spacing:0.2px;color:#6c6c6c">Поиск</div>
<svg style="left:1241px;top:127px" width="15" height="14" viewBox="0 0 15 14"><circle cx="1.5" cy="2" r="1.5" fill="#cfcfcf"/><circle cx="1.5" cy="7" r="1.5" fill="#cfcfcf"/><circle cx="1.5" cy="12" r="1.5" fill="#cfcfcf"/><rect x="4.5" y="1.2" width="10" height="1.7" fill="#cfcfcf"/><rect x="4.5" y="6.2" width="10" height="1.7" fill="#cfcfcf"/><rect x="4.5" y="11.2" width="10" height="1.7" fill="#cfcfcf"/></svg>
<div class="a" style="left:1011px;top:162px;width:264px;height:1px;background:#252525"></div>
<!-- Animated section -->
<svg style="left:1025px;top:178px" width="9" height="6" viewBox="0 0 9 6"><path d="M0.8 0.8 L4.5 4.5 L8.2 0.8" fill="none" stroke="#bdbdbd" stroke-width="1.5"/></svg>
<div class="t" style="left:1040px;top:175px;font-size:11.8px;letter-spacing:0px;color:#d4d4d4">Анимированный</div>
<div class="a" style="left:1025px;top:205px;width:202px;height:27px;background:#2c2c2c;border:1px solid #3d3d3d;border-radius:3px"></div>
<div class="t" style="left:1036px;top:213px;font-size:11.5px;letter-spacing:-0.45px;color:#dadada">Персонажи</div>
<svg style="left:1207px;top:216px" width="10" height="7" viewBox="0 0 10 7"><path d="M1 1 L5 5 L9 1" fill="none" stroke="#d0d0d0" stroke-width="1.6"/></svg>
<svg style="left:1241px;top:211px" width="14" height="15" viewBox="0 0 14 15"><path d="M0.5 0.5 H13.5 L8.5 6.5 V14.5 L5.5 12 V6.5 Z" fill="#cfcfcf"/></svg>
<div class="a" style="left:1025px;top:240px;width:202px;height:27px;background:#2c2c2c;border:1px solid #3d3d3d;border-radius:3px"></div>
<div class="t" style="left:1036px;top:248px;font-size:11.5px;letter-spacing:-0.4px;color:#dadada">Объекты</div>
<svg style="left:1207px;top:251px" width="10" height="7" viewBox="0 0 10 7"><path d="M1 1 L5 5 L9 1" fill="none" stroke="#d0d0d0" stroke-width="1.6"/></svg>
<!-- thumbnails -->
<div class="a" style="left:1011px;top:281px;width:264px;height:265px;overflow:hidden">
<svg style="left:0;top:0" width="264" height="265" viewBox="1011 281 264 265">
<g fill="#d6d6d6">
<rect x="1030" y="273" width="112" height="62"/><rect x="1145" y="273" width="111" height="62"/>
<rect x="1030" y="339" width="112" height="62"/><rect x="1145" y="339" width="111" height="62"/>
<rect x="1030" y="405" width="112" height="62"/>
<rect x="1030" y="471" width="112" height="62"/><rect x="1145" y="471" width="111" height="62"/>
<rect x="1030" y="537" width="112" height="62"/><rect x="1145" y="537" width="111" height="62"/>
</g>
<!-- 1 caveman -->
<g>
<path d="M1064 305 Q1058 312 1060 322 Q1058 330 1065 333 L1070 334 Q1076 336 1086 334 Q1090 330 1086 324 Q1092 318 1090 310 Q1094 304 1090 300 Z" fill="#f5c955"/>
<path d="M1066 306 Q1062 316 1064 324" fill="none" stroke="#e0a830" stroke-width="1"/>
<path d="M1072 307 L1076 312 L1080 307" fill="none" stroke="#3f6a20" stroke-width="1.2"/>
<circle cx="1076" cy="312" r="1.2" fill="#e8e020"/>
<path d="M1066 316 L1081 316 L1080 322 Q1074 324 1068 321 Z" fill="#2f7a1e"/>
<path d="M1066 316 L1081 316" stroke="#4a2a10" stroke-width="1.2"/>
<path d="M1087 323 L1101 297" stroke="#5a2a10" stroke-width="2.6"/>
<path d="M1094 311 L1102 296" stroke="#2f8a20" stroke-width="3.2"/>
<path d="M1101 300 L1105 298 L1113 303 L1109 310 L1102 308 Z" fill="#eeeeee" stroke="#8a8a8a" stroke-width="0.7"/>
<circle cx="1087" cy="322" r="2.8" fill="#f5c955"/>
<path d="M1061.5 301 Q1060 281 1066 273 L1094 273 Q1099 281 1098 301 Q1088 303 1080 300 Q1070 303 1061.5 301 Z" fill="#7a3032"/>
<path d="M1062 291 Q1080 294 1098 291" fill="none" stroke="#6a2628" stroke-width="1.6"/>
<circle cx="1073" cy="303" r="4" fill="#f5c955"/><circle cx="1084" cy="303" r="4" fill="#f5c955"/>
</g>
<!-- 2 blue crying -->
<g stroke="#6ec6f5" fill="none">
<path d="M1187 288 L1190 292 M1195 282 L1196 286 M1203 281 L1203 285 M1211 283 L1209 287 M1217 290 L1215 292" stroke-width="0.9"/>
<path d="M1195.5 312.5 Q1186 315 1177.5 306.5" stroke-width="2"/>
<path d="M1205.5 310 Q1216 308 1223.5 302" stroke-width="2"/>
<path d="M1177.5 306.5 L1174 304 M1177.5 306.5 L1176 302.5 M1177.5 306.5 L1179 302.5 M1177.5 306.5 L1174 308" stroke-width="1.2"/>
<path d="M1223.5 302 L1222 298 M1223.5 302 L1225.5 298.5 M1223.5 302 L1227 301.5 M1223.5 302 L1226 305" stroke-width="1.2"/>
<path d="M1198 325 L1195 334 M1203.5 325 L1203 334" stroke-width="2.6"/>
</g>
<path d="M1196.5 310 L1206 310 L1205 327 L1197 327 Z" fill="#6ec6f5"/>
<circle cx="1200.5" cy="301.5" r="10.5" fill="#6ec6f5"/>
<path d="M1194.5 305.5 Q1195 298 1200.3 298 Q1205.8 298 1206 305.5 Q1200 307.5 1194.5 305.5 Z" fill="#181818"/>
<path d="M1197 305 Q1200 303.5 1203.5 305" stroke="#d08090" stroke-width="1" fill="none"/>
<path d="M1195 297 L1198 295.5 M1203 295.5 L1206 297" stroke="#2a4a6a" stroke-width="0.8"/>
<!-- 3 blue bird -->
<g>
<path d="M1079 352 L1082 342 L1086 345 L1090 337 L1093 348 L1101 346 L1098 355 Z" fill="#3a6cab"/>
<path d="M1060 376 L1049 372 L1051 380 L1042 383 L1048 388 L1042 394 L1052 395 L1049 401 L1060 399 Z" fill="#3a6cab"/>
<rect x="1058" y="354" width="51" height="50" rx="5" fill="#3c6fae"/>
<rect x="1058" y="392" width="51" height="12" fill="#33619c"/>
<path d="M1067 358 L1077 357 L1083 381 L1075 384 Q1064 378 1065 368 Z" fill="#30609a" stroke="#2a5688" stroke-width="0.6"/>
<circle cx="1098" cy="371" r="7.3" fill="#0d0d0d"/><circle cx="1100" cy="368.3" r="3.2" fill="#fff"/><circle cx="1095" cy="374" r="1" fill="#fff"/>
<rect x="1097" y="382" width="34" height="16" rx="7.5" fill="#f28c1e"/>
<path d="M1102 389.5 H1129" stroke="#c86a10" stroke-width="1.2"/>
</g>
<!-- 4 knight -->
<g>
<path d="M1156 390 Q1162 376 1176 370 L1184 372 L1182 388 Q1170 390 1156 390 Z" fill="#7e2a18"/>
<path d="M1173.5 340 Q1182 350 1188 366 L1183 368 Q1175 356 1173.5 340 Z" fill="#e8e8e8" stroke="#b8b8b8" stroke-width="0.5"/>
<path d="M1176.5 346 Q1183 356 1186 366" stroke="#dcae30" stroke-width="2" fill="none"/>
<path d="M1197 343 Q1195 349 1196 356 L1203 355 Q1201 348 1197 343 Z" fill="#e8e8e8" stroke="#b8b8b8" stroke-width="0.5"/>
<path d="M1172 378 Q1174 370 1184 370 L1202 372 Q1206 382 1204 392 L1196 398 L1186 399 L1176 395 Q1170 388 1172 378 Z" fill="#f0f0f0"/>
<path d="M1171.5 372 Q1176 369 1183 371 L1184 380 Q1178 382 1172 380 Z" fill="#e0b038"/>
<circle cx="1177" cy="390" r="3.3" fill="#f4f4f4" stroke="#333" stroke-width="0.7"/>
<path d="M1183 384 L1190 388 M1190 381 L1196 383" stroke="#222" stroke-width="1.6"/>
<circle cx="1198" cy="393" r="3" fill="#1a1a1a"/>
<circle cx="1186" cy="395" r="2.4" fill="#e0b038"/>
<path d="M1185 363 Q1184 350 1195 349 Q1206 350 1205.5 363 Q1205 374 1196 378 Q1186 375 1185 363 Z" fill="#f2f2f2" stroke="#c4c4c4" stroke-width="0.5"/>
<path d="M1192.3 363.6 L1196.5 356 L1200.9 363.6 Z" fill="#e8be38"/>
<path d="M1185.7 363 L1203.7 363 L1203 372 L1197 377 L1195 377 L1189 372 Z" fill="#e0b030"/>
<path d="M1189 366 L1200 366 M1195 366 L1195 374" stroke="#5a4410" stroke-width="1"/>
<path d="M1211 386 L1243.5 366" stroke="#efefef" stroke-width="3.8"/>
<path d="M1211 387.5 L1243.5 367.5" stroke="#b0b0b0" stroke-width="0.5"/>
<path d="M1211 386 L1222 379.5" stroke="#e0b840" stroke-width="1.4"/>
<path d="M1207 380 Q1206 388 1211 394 M1205 391 Q1212 392 1219 395" stroke="#dcae30" stroke-width="2" fill="none"/>
<circle cx="1209" cy="389.5" r="1.3" fill="#b02020"/>
</g>
<!-- 5 caveman 2 -->
<g>
<path d="M1062 466.5 L1062 452 Q1058 446 1062 441 Q1066 436 1072 436 L1074 432 L1104 432 Q1106 440 1102 446 Q1106 452 1100 455 Q1096 458 1090 458 L1099 452 Q1102 456 1094 462 Q1086 466 1082 462 L1080 458 Q1074 456 1070 452 L1069 466.5 Z" fill="#f5c955"/>
<path d="M1071 447 L1088 447 L1087 454 Q1080 457 1073 453 Z" fill="#2f7a1e"/>
<path d="M1071 447.5 L1088 447.5" stroke="#4a2a10" stroke-width="1.2"/>
<path d="M1081 440 L1084 444 L1087 440" fill="none" stroke="#3f6a20" stroke-width="1"/>
<path d="M1100 446 L1101 450" stroke="#2f7a1e" stroke-width="1.6"/>
<path d="M1070.7 426 Q1070 405 1089 404 Q1109 405 1108.6 428 Q1104 434 1094 433 Q1090 434 1089 430 Q1087 434 1082 433 Q1073 433 1070.7 426 Z" fill="#7a3032"/>
<path d="M1071 421 Q1089 424 1108 421" fill="none" stroke="#6a2628" stroke-width="1.6"/>
<path d="M1089 405 V430" stroke="#652426" stroke-width="0.6"/>
<path d="M1108 418 L1113 418 L1113 426 L1108 425 Z" fill="#e8e8e8" stroke="#888" stroke-width="0.6"/>
<circle cx="1082" cy="436" r="3.5" fill="#f5c955"/><circle cx="1093" cy="436" r="3.5" fill="#f5c955"/>
</g>
<!-- 6 stork thumb selected -->
<g>
<rect x="1145" y="405" width="111" height="62" fill="#d6d6d6"/>
<rect x="1145" y="450" width="111" height="17" fill="#f0f0f0"/>
<path d="M1146 438 L1165 439 L1165 442 L1146 443 Z" fill="#c08050"/>
<path d="M1167 442 Q1162 432 1168 426 Q1176 421 1190 423 Q1201 427 1202 434 Q1200 442 1185 444 Q1172 445 1167 442 Z" fill="#fbfbfb" stroke="#b8d0e8" stroke-width="0.5"/>
<path d="M1200 435 Q1212 433 1219 423 L1223 424 Q1216 437 1201 440 Z" fill="#fbfbfb" stroke="#b8d0e8" stroke-width="0.4"/>
<ellipse cx="1224" cy="420" rx="5.8" ry="4" fill="#fbfbfb"/>
<circle cx="1227" cy="419.5" r="0.8" fill="#223"/>
<path d="M1228 421 L1251 418 L1229 424 Z" fill="#d8aa60"/>
<path d="M1164 428 L1168 427 L1170 436 L1165 434 Z" fill="#1b2a38"/>
<path d="M1159 446 Q1170 436 1190 441 L1182 447 Q1170 449 1159 446 Z" fill="#1b2a38"/>
<path d="M1160 441 Q1168 436 1178 440 L1170 443 Z" fill="#22323f"/>
<path d="M1241 418 Q1232 434 1233.8 449 Q1242 452 1250 448 Q1252 432 1243 418 Z" fill="#6a8ee0"/>
<path d="M1236 411 Q1240 409 1244 417 L1240 419 Q1235 415 1236 411 Z" fill="#6a8ee0"/>
<circle cx="1250.5" cy="438" r="5.2" fill="#f0b898"/>
<path d="M1245.5 436 Q1248 431 1255 433 L1256 440 Q1252 436 1245.5 436 Z" fill="#8b4a2f"/>
<text x="1153.5" y="463.5" font-family="Liberation Sans" font-size="11.2" letter-spacing="-0.3" fill="#3a3a3a">Stork with Baby</text>
<rect x="1145.75" y="405.25" width="109.5" height="61" fill="none" stroke="#2f7ad0" stroke-width="1.6"/>
<rect x="1144.5" y="404" width="112" height="63.5" fill="none" stroke="#1e5aa0" stroke-width="0.8"/>
</g>
<!-- 7 pigeon -->
<g>
<path d="M1075 510 Q1066 503 1054 505 Q1045 508 1045 516 Q1046 526 1054 529 Q1064 528 1076 520 Z" fill="#5d6480"/>
<path d="M1054 506 Q1047 510 1047 517 Q1048 524 1054 527" fill="none" stroke="#40465e" stroke-width="1.6"/>
<path d="M1068 518 Q1080 512 1100 512 Q1112 514 1112 524 Q1106 532 1088 533 Q1074 532 1068 518 Z" fill="#8a90aa"/>
<path d="M1104 512 Q1112 510 1116 516 Q1114 526 1106 530 Q1100 526 1102 516 Z" fill="#2f8a62"/>
<path d="M1102 513 Q1106 520 1104 530" stroke="#b060c0" stroke-width="2.2" fill="none"/>
<circle cx="1117" cy="514" r="6" fill="#8a90aa"/><circle cx="1119" cy="514" r="2.2" fill="#c8c8d8"/><circle cx="1119.5" cy="514.5" r="0.9" fill="#3a1a1a"/>
<path d="M1123 514 L1127 516.5 L1123 517.5 Z" fill="#e06060"/>
<path d="M1072 476 Q1080 470 1090 472 Q1100 480 1104 500 Q1104 515 1096 520 Q1084 520 1078 510 Q1072 494 1072 476 Z" fill="#dcd8f0"/>
<path d="M1072 476 Q1074 494 1078 510" fill="none" stroke="#b0aad0" stroke-width="2"/>
<path d="M1098 512 Q1096 490 1104 478 Q1112 472 1117 474 Q1120 494 1110 510 Z" fill="#6a7090"/>
<path d="M1104 478 Q1112 472 1117 474 Q1116 486 1112 498" fill="none" stroke="#4a5070" stroke-width="1.6"/>
<path d="M1083 529 L1091 532" stroke="#d05040" stroke-width="1.6"/>
</g>
<!-- 8 blond warrior -->
<g>
<path d="M1183 508 Q1190 505 1200 505 Q1208 507 1208 512 L1209 524 L1200 522 L1193 524 L1183 524 Z" fill="#b02a2a"/>
<path d="M1190 507 L1201 507 L1200 522 L1192 522 Z" fill="#f0ece0"/>
<path d="M1190 516 L1226 503" stroke="#d8d8d8" stroke-width="2.8"/><path d="M1190 517 L1226 504" stroke="#707070" stroke-width="0.6"/>
<circle cx="1193" cy="513" r="2.4" fill="#f8d090"/>
<path d="M1184 524 H1194 V531 H1184 Z M1197 524 H1207 V531 H1197 Z" fill="#f4f4f4" stroke="#c8a040" stroke-width="0.7"/>
<path d="M1178 496 Q1177 484 1192 482 Q1208 482 1210 496 Q1210 506 1194 507 Q1179 506 1178 496 Z" fill="#f8d090"/>
<path d="M1179 494 L1182 480 L1186 484 L1190 471 L1196 479 L1204 472 L1204 481 L1214 477 L1210 486 L1216 490 L1209 492 Q1206 484 1196 488 L1190 490 Q1184 486 1179 494 Z" fill="#f4cf20"/>
<path d="M1185 497 L1190 499 M1197 499 L1202 497" stroke="#b08020" stroke-width="0.8"/>
<circle cx="1188" cy="500.5" r="1.5" fill="#3aa0d0"/><circle cx="1200" cy="500.5" r="1.5" fill="#3aa0d0"/>
</g>
<!-- 9 row5 -->
<g>
<path d="M1062 538 L1074 537 L1078 546 L1068 546 Z" fill="#f4c8d4"/>
<path d="M1074 537 L1084 538 L1088 546 L1076 546 Z" fill="#a81818"/>
<path d="M1078 543 L1093 541 L1092 546 L1079 546 Z" fill="#3a7a2a"/>
<path d="M1093 541 L1100 541 L1103 546 L1093 546 Z" fill="#fff"/>
<circle cx="1107" cy="544" r="3.2" fill="#f0d050"/>
<path d="M1200 546 Q1208 540 1220 538 L1228 540 L1233 537 L1240 546 Z" fill="#7a4a2a"/>
<path d="M1230 540 L1236 538 L1237 546 L1232 546 Z" fill="#e8a0a0"/>
</g>
</svg>

</div>
<!-- scrollbar -->
<div class="a" style="left:1266px;top:439px;width:3px;height:33px;background:#5a5a5a;border-radius:2px"></div>
<div class="t" style="left:1126px;top:561.5px;font-size:12.2px;letter-spacing:-0.2px;color:#dcdcdc">Показать следующее</div>
<svg style="left:1248px;top:562px" width="9" height="11" viewBox="0 0 9 11"><path d="M4.5 0.5 V10 M1 6.5 L4.5 10 L8 6.5" fill="none" stroke="#dcdcdc" stroke-width="1.5"/></svg>
<div class="a" style="left:1011px;top:595px;width:264px;height:1px;background:#262626"></div>
<svg style="left:1025px;top:610px" width="6" height="10" viewBox="0 0 6 10"><path d="M0.8 0.8 L4.8 5 L0.8 9.2" fill="none" stroke="#bdbdbd" stroke-width="1.4"/></svg>
<div class="t" style="left:1040px;top:608.5px;font-size:11.8px;letter-spacing:-0.35px;color:#d4d4d4">Статический</div>
<div class="a" style="left:1011px;top:630px;width:264px;height:2px;background:#272727"></div>
<div class="a" style="left:1011px;top:642px;width:264px;height:2px;background:#272727"></div>
<svg style="left:1031px;top:649px" width="17" height="16" viewBox="0 0 17 16"><path d="M4 11 Q0 11 0.5 7.5 Q1 5 3.5 5.2 Q4.5 1 8.5 1 Q12.5 1 13 5 Q16.5 5 16.5 8 Q16.5 11 13 11 Z" fill="#5a5a5a"/><path d="M8.5 6 V15 M6 12.5 L8.5 15 L11 12.5" fill="none" stroke="#5a5a5a" stroke-width="1.4"/><path d="M8.5 6 V11" stroke="#323232" stroke-width="0.8"/></svg>
<svg style="left:1241px;top:650px" width="13" height="15" viewBox="0 0 13 15"><rect x="0" y="2" width="13" height="1.6" fill="#cfcfcf"/><rect x="4.5" y="0" width="4" height="2" fill="#cfcfcf"/><path d="M1.5 4.5 H11.5 L10.5 14.5 H2.5 Z" fill="#cfcfcf"/><path d="M4.7 6 V13 M6.5 6 V13 M8.3 6 V13" stroke="#323232" stroke-width="0.8"/></svg>

</body></html>
